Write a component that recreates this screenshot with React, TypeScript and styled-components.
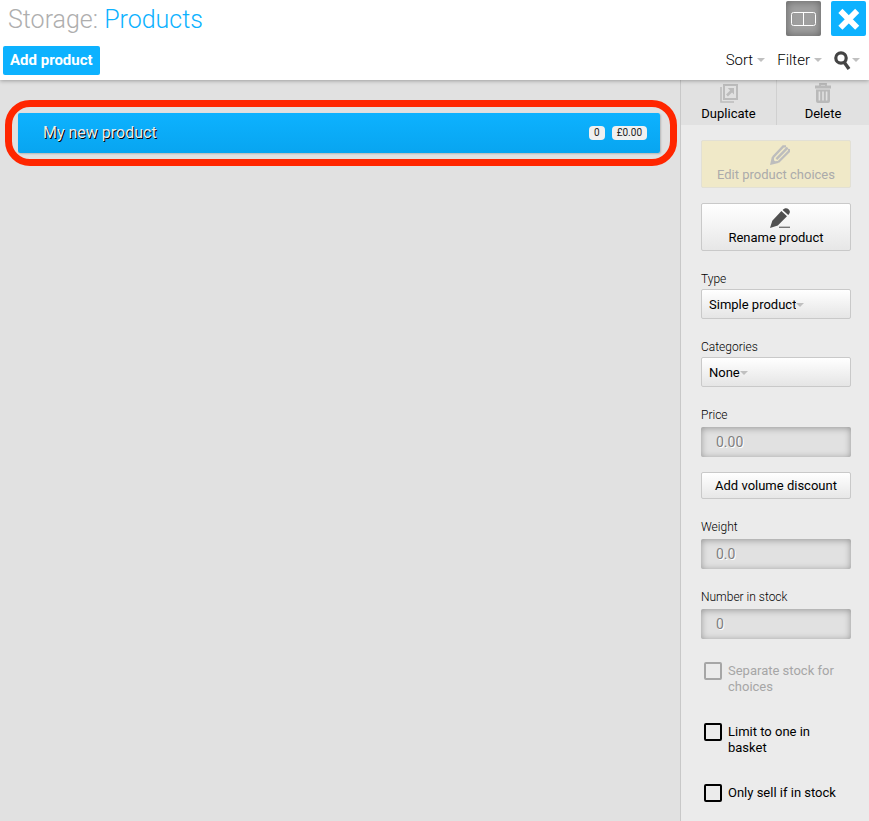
import React from "react";
import styled, { createGlobalStyle } from "styled-components";

const GlobalStyle = createGlobalStyle`
  *, *::before, *::after { box-sizing: border-box; }
  body {
    margin: 0;
    background: #e1e1e1;
    color: #000;
    font-family: Roboto, "Liberation Sans", sans-serif;
    font-size: 13px;
    line-height: 16px;
  }
  button, input, select { font: inherit; color: inherit; }
  button { cursor: pointer; }
  button:disabled { cursor: default; }
`;

const Page = styled.div`
  display: flex;
  flex-direction: column;
  min-height: 100vh;
`;

const Header = styled.header`
  position: relative;
  background: #fff;
  height: 80px;
  box-shadow: 0 1px 4px rgba(0, 0, 0, 0.3);
`;

const HeaderRow = styled.div<{ $tools?: boolean }>`
  display: flex;
  align-items: ${(p) => (p.$tools ? "center" : "flex-start")};
  justify-content: space-between;
  height: 40px;
  padding: ${(p) => (p.$tools ? "0 9px 0 3px" : "1px 3px 0 8px")};
`;

const Title = styled.h1`
  margin: 4px 0 0;
  font-size: 25px;
  line-height: 30px;
  font-weight: 300;
  color: #aeaeae;

  span { color: #0db2ff; }
`;

const WindowButtons = styled.div`
  display: flex;
  gap: 10px;
`;

const SquareButton = styled.button<{ $close?: boolean }>`
  display: flex;
  align-items: center;
  justify-content: center;
  width: 35px;
  height: 35px;
  padding: 0;
  border: 0;
  border-radius: 2px;
  background: ${(p) => (p.$close ? "#0db2ff" : "#9f9f9f")};
  box-shadow: ${(p) => (p.$close ? "none" : "inset 0 0 8px rgba(0, 0, 0, 0.4)")};
`;

const AddButton = styled.button`
  height: 29px;
  padding: 0 7px;
  border: 0;
  border-radius: 2px;
  background: #0db2ff;
  color: #fff;
  font-size: 15px;
  font-weight: 700;
`;

const Tools = styled.div`
  display: flex;
  gap: 12px;
`;

const ToolButton = styled.button<{ $icon?: boolean }>`
  display: flex;
  align-items: center;
  gap: ${(p) => (p.$icon ? 1 : 4)}px;
  padding: 0;
  border: 0;
  background: none;
  font-size: 15px;
  font-weight: 300;
  line-height: 20px;
`;

const Main = styled.div`
  display: flex;
  flex: 1;
`;

const List = styled.main`
  flex: 1;
  min-width: 0;
  padding: 20px 3px 0 5px;
`;

const Highlight = styled.div`
  padding: 6px 10px 6px 6px;
  border: 7px solid #ff2600;
  border-radius: 25px;
`;

const ProductRow = styled.div`
  display: flex;
  align-items: center;
  gap: 7px;
  height: 40px;
  padding: 0 13px 0 25px;
  border-radius: 2px;
  background: linear-gradient(#0db2ff, #08a5f0);
  box-shadow: 1px 1px 2px rgba(0, 0, 0, 0.2);
`;

const ProductName = styled.span`
  flex: 1;
  color: #ebebeb;
  font-size: 16px;
  line-height: 20px;
  text-shadow: 1px 1px 0 #000;
`;

const Badge = styled.span`
  padding: 0 5px;
  border-radius: 4px;
  background: #f0f0f0;
  color: #222;
  font-size: 10px;
  line-height: 14px;
`;

const Sidebar = styled.aside`
  flex: 0 0 189px;
  border-left: 1px solid #c8c8c8;
  background: #ebebeb;
`;

const Actions = styled.div`
  display: grid;
  grid-template-columns: 95px 1fr;
  height: 45px;
`;

const Action = styled.button`
  display: flex;
  flex-direction: column;
  align-items: center;
  gap: 3px;
  padding: 3px 0 0;
  border: 0;
  background: #e1e1e1;

  & + & { border-left: 1px solid #d0d0d0; }
`;

const Form = styled.form`
  display: flex;
  flex-direction: column;
  padding: 15px 18px 17px 20px;
`;

const PanelButton = styled.button<{ $muted?: boolean; $compact?: boolean }>`
  display: flex;
  flex-direction: column;
  align-items: center;
  justify-content: center;
  height: ${(p) => (p.$compact ? 27 : 48)}px;
  margin-bottom: ${(p) => (p.$compact ? 20 : 15)}px;
  padding: 0;
  border: 1px solid ${(p) => (p.$muted ? "#e2e0d5" : "#c9c9c9")};
  border-radius: 2px;
  background: ${(p) => (p.$muted ? "#f0e9c8" : "linear-gradient(#fff, #e7e7e7)")};

  && { color: ${(p) => (p.$muted ? "#ababab" : "#000")}; }
`;

const ButtonIcon = styled.span`
  display: flex;
  padding: 0 0 2px 8px;
`;

const Field = styled.div`
  margin-bottom: 20px;
`;

const Fields = styled.div`
  padding-top: 5px;
`;

const FieldLabel = styled.label<{ $input?: boolean }>`
  display: block;
  margin-bottom: ${(p) => (p.$input ? 4 : 2)}px;
  font-size: 12px;
  font-weight: 300;
`;

const SelectBox = styled.div`
  display: flex;
  align-items: center;
  height: 30px;
  padding: 1px 7px 0;
  border: 1px solid #c9c9c9;
  border-radius: 2px;
  background: linear-gradient(#fff, #e5e5e5);
`;

const Select = styled.select`
  appearance: none;
  field-sizing: content;
  padding: 0;
  border: 0;
  background: none;
`;

const TextInput = styled.input`
  display: block;
  width: 100%;
  height: 30px;
  padding: 0 15px;
  border: 0;
  border-radius: 2px;
  background: #e1e1e1;
  box-shadow: inset 0 1px 7px rgba(0, 0, 0, 0.34);
  font-size: 14px;
  text-shadow: 1px 1px 0 #fff;

  &::placeholder { color: #808080; opacity: 1; }
`;

const Checks = styled.div`
  display: flex;
  flex-direction: column;
  gap: 28px;
  padding: 3px 0 0 3px;
`;

const CheckLabel = styled.label<{ $muted?: boolean }>`
  display: flex;
  align-items: flex-start;
  gap: 6px;
  min-height: 18px;
  color: ${(p) => (p.$muted ? "#a6a6a6" : "#000")};

  span { padding-top: 1px; }
`;

const Checkbox = styled.input`
  appearance: none;
  flex: none;
  width: 18px;
  height: 18px;
  margin: 0;
  border: 2px solid currentColor;
  border-radius: 2px;

  &:checked { background: currentColor; }
`;

const VolumeDiscount = styled.div`
  display: grid;
  margin-top: -5px;
`;

const Caret = () => (
  <svg width="8" height="4" viewBox="0 0 8 4" aria-hidden="true">
    <path d="M0 0h8L4 4z" fill="#c0c0c0" />
  </svg>
);

const PanesIcon = () => (
  <svg width="26" height="16" viewBox="0 0 26 16" fill="none" stroke="#fff">
    <rect x="0.5" y="1.5" width="24" height="13" rx="2" />
    <path d="M12.5 1.5v13" />
  </svg>
);

const CloseIcon = () => (
  <svg width="23" height="23" viewBox="0 0 23 23" stroke="#fff" strokeWidth="5.8">
    <path d="M3.4 3.9l16.8 16.8M20.2 3.9L3.4 20.7" />
  </svg>
);

const SearchIcon = () => (
  <svg width="17" height="19" viewBox="0 0 17 19" fill="none" stroke="#444">
    <circle cx="7" cy="7" r="5.2" strokeWidth="3.2" />
    <path d="M10 11l5 7" strokeWidth="3.4" />
  </svg>
);

const DuplicateIcon = () => (
  <svg width="18" height="20" viewBox="0 0 18 20" fill="none" stroke="#bcbcbc">
    <rect x="4" y="2" width="13" height="14" strokeWidth="2" />
    <path d="M1 4v15h13" strokeWidth="1.6" />
    <path d="M7 12.5l5-5" strokeWidth="2.6" />
    <path d="M7.8 5H14v6.4z" fill="#bcbcbc" stroke="none" />
  </svg>
);

const TrashIcon = () => (
  <svg width="16" height="20" viewBox="0 0 16 20" fill="none" stroke="#b9b9b9">
    <path d="M5 3V1h6v2" strokeWidth="1.8" />
    <path d="M0 4h16" strokeWidth="3" />
    <path
      d="M1 6.5h14V18a2 2 0 0 1-2 2H3a2 2 0 0 1-2-2zM3.6 8.5v9h1.6v-9zM7.2 8.5v9h1.6v-9zM10.8 8.5v9h1.6v-9z"
      fill="#b9b9b9"
      fillRule="evenodd"
      stroke="none"
    />
  </svg>
);

const PencilOutlineIcon = () => (
  <svg width="20" height="20" viewBox="0 0 20 20" fill="none" stroke="#bdbdbd">
    <path d="M3 12.2L13.2 1.4H16" strokeWidth="2.4" />
    <path d="M6.4 14.2L17.6 2.6" strokeWidth="2.4" />
    <path d="M8.4 17L19 6.4V4" strokeWidth="2.2" />
    <path d="M3 12v3.6l1.6 1.6 4-.4" strokeWidth="1.4" />
    <path d="M0 20l1.8-8L4 11.8v3.4l1.2 1.2 3.6-.2-.4 1.8z" fill="#bdbdbd" stroke="none" />
  </svg>
);

const PencilIcon = () => (
  <svg width="20" height="20" viewBox="0 0 20 20" fill="#505050">
    <path d="M0 20l2.3-7.2L11.4 3l5.6 5.2-9.2 9.2zM12.6 1.9C14.5-.2 17-.4 18.8 1.4c1.7 1.8 1.4 3.8-.6 5.7z" />
    <path d="M9 18.6h11v1.4H9z" fill="#777" />
  </svg>
);

const TextField = ({ id, label, value }: { id: string; label: string; value: string }) => (
  <Field>
    <FieldLabel htmlFor={id} $input>{label}</FieldLabel>
    <TextInput id={id} placeholder={value} inputMode="decimal" />
  </Field>
);

const SelectField = ({ id, label, options }: { id: string; label: string; options: string[] }) => (
  <Field>
    <FieldLabel htmlFor={id}>{label}</FieldLabel>
    <SelectBox>
      <Select id={id}>
        {options.map((option) => <option key={option}>{option}</option>)}
      </Select>
      <Caret />
    </SelectBox>
  </Field>
);

const CheckField = ({ label, disabled }: { label: string; disabled?: boolean }) => (
  <CheckLabel $muted={disabled}>
    <Checkbox type="checkbox" disabled={disabled} />
    <span>{label}</span>
  </CheckLabel>
);

export default function App() {
  return (
    <>
      <GlobalStyle />
      <Page>
        <Header>
          <HeaderRow>
            <Title>Storage: <span>Products</span></Title>
            <WindowButtons>
              <SquareButton type="button" aria-label="Toggle panes"><PanesIcon /></SquareButton>
              <SquareButton type="button" $close aria-label="Close"><CloseIcon /></SquareButton>
            </WindowButtons>
          </HeaderRow>
          <HeaderRow $tools>
            <AddButton type="button">Add product</AddButton>
            <Tools>
              <ToolButton type="button">Sort <Caret /></ToolButton>
              <ToolButton type="button">Filter <Caret /></ToolButton>
              <ToolButton type="button" $icon aria-label="Search"><SearchIcon /><Caret /></ToolButton>
            </Tools>
          </HeaderRow>
        </Header>
        <Main>
          <List>
            <Highlight>
              <ProductRow>
                <ProductName>My new product</ProductName>
                <Badge>0</Badge>
                <Badge>£0.00</Badge>
              </ProductRow>
            </Highlight>
          </List>
          <Sidebar>
            <Actions>
              <Action type="button"><DuplicateIcon />Duplicate</Action>
              <Action type="button"><TrashIcon />Delete</Action>
            </Actions>
            <Form>
              <PanelButton type="button" disabled $muted>
                <ButtonIcon><PencilOutlineIcon /></ButtonIcon>Edit product choices
              </PanelButton>
              <PanelButton type="button">
                <ButtonIcon><PencilIcon /></ButtonIcon>Rename product
              </PanelButton>
              <Fields>
                <SelectField id="type" label="Type" options={["Simple product"]} />
                <SelectField id="categories" label="Categories" options={["None"]} />
                <TextField id="price" label="Price" value="0.00" />
                <VolumeDiscount>
                  <PanelButton type="button" $compact>Add volume discount</PanelButton>
                </VolumeDiscount>
                <TextField id="weight" label="Weight" value="0.0" />
                <TextField id="stock" label="Number in stock" value="0" />
                <Checks>
                  <CheckField label="Separate stock for choices" disabled />
                  <CheckField label="Limit to one in basket" />
                  <CheckField label="Only sell if in stock" />
                </Checks>
              </Fields>
            </Form>
          </Sidebar>
        </Main>
      </Page>
    </>
  );
}
